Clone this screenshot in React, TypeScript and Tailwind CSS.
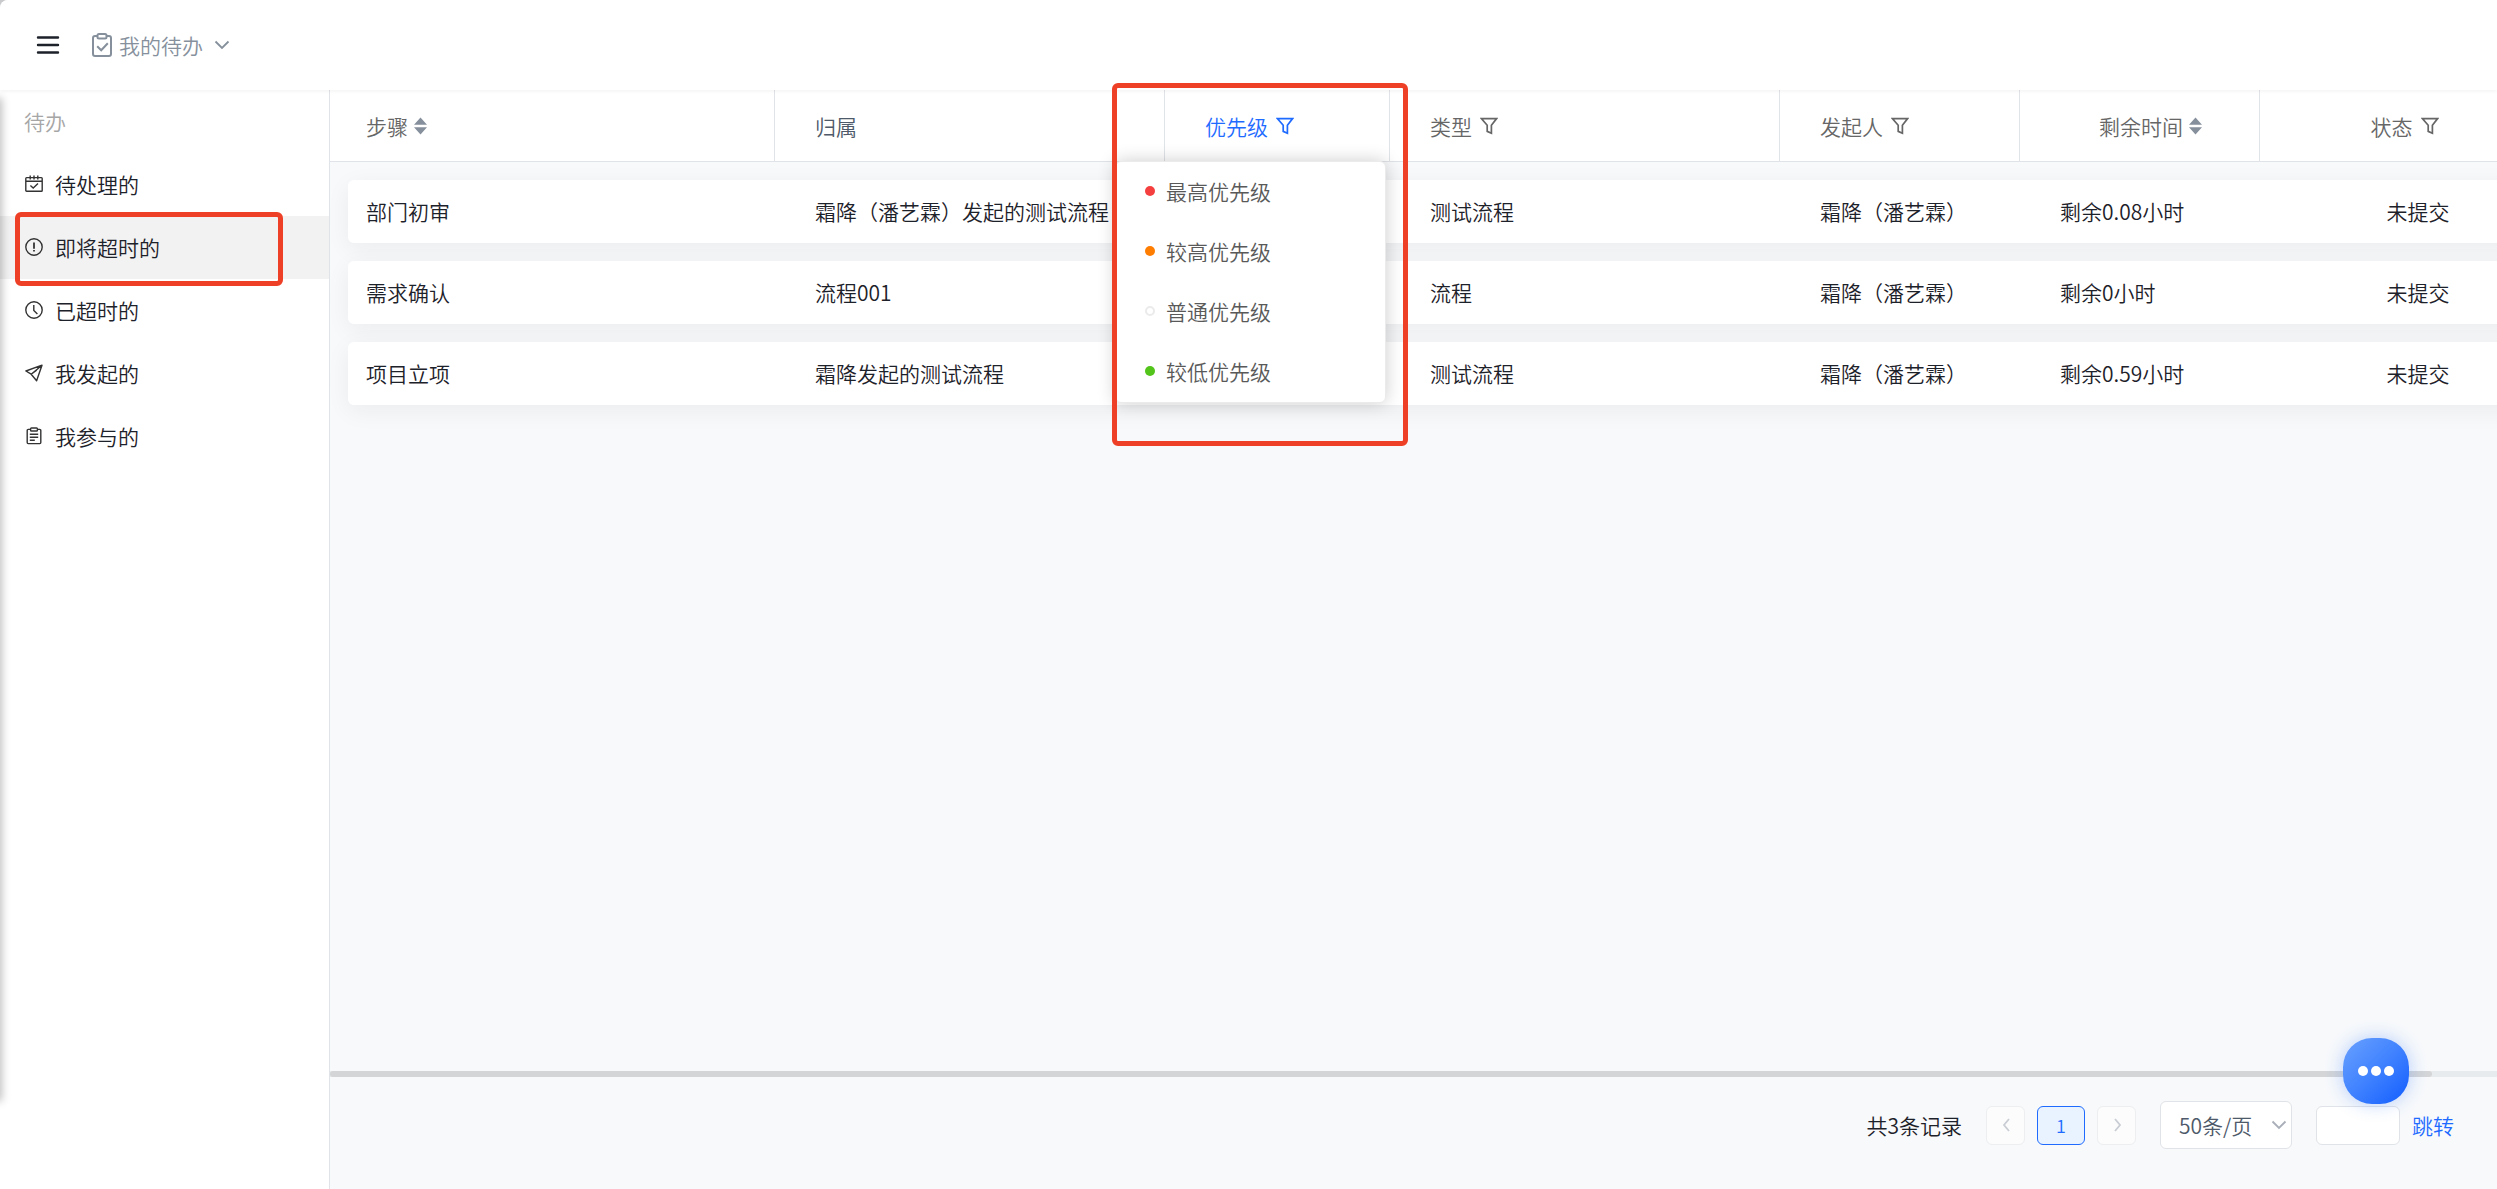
import { useState } from 'react'
import type { ReactNode } from 'react'
import clsx from 'clsx'

interface Task {
  id: string
  step: string
  owner: string
  type: string
  creator: string
  remaining: string
  status: string
}

interface MenuItem {
  key: string
  label: string
  icon: ReactNode
}

const tasks: Task[] = [
  { id: '1', step: '部门初审', owner: '霜降（潘艺霖）发起的测试流程', type: '测试流程', creator: '霜降（潘艺霖）', remaining: '剩余0.08小时', status: '未提交' },
  { id: '2', step: '需求确认', owner: '流程001', type: '流程', creator: '霜降（潘艺霖）', remaining: '剩余0小时', status: '未提交' },
  { id: '3', step: '项目立项', owner: '霜降发起的测试流程', type: '测试流程', creator: '霜降（潘艺霖）', remaining: '剩余0.59小时', status: '未提交' },
]

const priorities = [
  { label: '最高优先级', dot: 'bg-[#f53f3f]' },
  { label: '较高优先级', dot: 'bg-[#ff7d00]' },
  { label: '普通优先级', dot: 'border-2 border-[#ebebeb] bg-white' },
  { label: '较低优先级', dot: 'bg-[#52c41a]' },
]

const iconProps = {
  viewBox: '0 0 18 18',
  fill: 'none',
  stroke: 'currentColor',
  strokeWidth: 1.4,
  className: 'size-[18px] shrink-0 text-[#333]',
  'aria-hidden': true,
} as const

const menu: MenuItem[] = [
  {
    key: 'todo',
    label: '待处理的',
    icon: (
      <svg {...iconProps}>
        <rect x="0.8" y="2.6" width="16.4" height="13.6" rx="0.8" />
        <path d="M1 6.2h16M5.2.6v3.800M9 .6v3.800M12.800.6v3.800M5.400 10.400l2.800 2.600 4.800-4.400" />
      </svg>
    ),
  },
  {
    key: 'soon',
    label: '即将超时的',
    icon: (
      <svg {...iconProps}>
        <circle cx="9" cy="9" r="8.2" />
        <path d="M9 4.4v6.400M9 12v1.600" strokeWidth="1.800" />
      </svg>
    ),
  },
  {
    key: 'overdue',
    label: '已超时的',
    icon: (
      <svg {...iconProps}>
        <circle cx="9" cy="9" r="8.2" />
        <path d="M8.800 4v5.400l3.600 3.600" />
      </svg>
    ),
  },
  {
    key: 'started',
    label: '我发起的',
    icon: (
      <svg {...iconProps} strokeLinejoin="round">
        <path d="M17 1.2.9 7l5.3 3.2zM17 1.2l-5.4 15.6-5.4-6.6zM6.2 10.2 11.6 6.2" />
      </svg>
    ),
  },
  {
    key: 'joined',
    label: '我参与的',
    icon: (
      <svg {...iconProps}>
        <path d="M5.600 2.400H3.200a1 1 0 0 0-1 1v12.200a1 1 0 0 0 1 1h11.600a1 1 0 0 0 1-1V3.400a1 1 0 0 0-1-1h-2.400" />
        <rect x="5.600" y="1" width="6.800" height="3" rx="0.800" />
        <path d="M4.800 7.200h8.400M4.800 10.200h8.400M4.800 13.200h5" />
      </svg>
    ),
  },
]

function SortIcon() {
  return (
    <svg viewBox="0 0 13 18" className="h-[18px] w-[13px] shrink-0 fill-[#86909c]" aria-hidden="true">
      <path d="M6.500 .4 13 7.800H0zM6.500 17.600 0 10.200h13z" />
    </svg>
  )
}

function FilterIcon() {
  return (
    <svg viewBox="0 0 18 18" className="size-[18px] shrink-0" fill="none" stroke="currentColor" strokeWidth="1.700" aria-hidden="true">
      <path d="M1.400 1.600h15.200l-5.200 6.600v8L7.200 14.400V8.200z" />
    </svg>
  )
}

function Chevron({ className, d }: { className: string; d: string }) {
  return (
    <svg viewBox="0 0 16 16" className={className} fill="none" stroke="currentColor" strokeWidth="1.800" aria-hidden="true">
      <path d={d} />
    </svg>
  )
}

function Columns({ first }: { first: string }) {
  return (
    <colgroup>
      <col className={first} />
      <col className="w-[390px]" />
      <col className="w-[225px]" />
      <col className="w-[390px]" />
      <col className="w-[240px]" />
      <col className="w-[240px]" />
      <col className="w-[268px]" />
    </colgroup>
  )
}

function HeaderCell({ children, className, center }: { children: ReactNode; className?: string; center?: boolean }) {
  return (
    <th
      scope="col"
      className={clsx('border-r border-b border-[#e0e3e7] p-0 pr-[18px] font-[350]', className ?? 'pl-10')}
    >
      <div className={clsx('flex items-center', center && 'justify-center')}>{children}</div>
    </th>
  )
}

function TaskTable() {
  return (
    <div className="flex-1 overflow-hidden">
      <table className="w-[2198px] table-fixed border-separate border-spacing-0 bg-white text-left text-[#666]">
        <Columns first="w-[445px]" />
        <thead>
          <tr className="h-[72px]">
            <HeaderCell className="pl-9">
              <button type="button" className="flex items-center gap-[6px]">步骤<SortIcon /></button>
            </HeaderCell>
            <HeaderCell>
              <span className="text-[#4e5969]">归属</span>
            </HeaderCell>
            <HeaderCell>
              <button type="button" aria-expanded="true" className="flex items-center gap-2 text-[#1f6bff]">优先级<FilterIcon /></button>
            </HeaderCell>
            <HeaderCell>
              <button type="button" className="flex items-center gap-2">类型<FilterIcon /></button>
            </HeaderCell>
            <HeaderCell>
              <button type="button" className="flex items-center gap-2">发起人<FilterIcon /></button>
            </HeaderCell>
            <HeaderCell center>
              <button type="button" className="flex items-center gap-[6px]">剩余时间<SortIcon /></button>
            </HeaderCell>
            <HeaderCell center>
              <button type="button" className="flex items-center gap-2">状态<FilterIcon /></button>
            </HeaderCell>
          </tr>
        </thead>
      </table>
      <div className="px-[18px]">
        <table className="w-[2180px] table-fixed border-separate border-spacing-x-0 border-spacing-y-[18px] text-left text-[#1d2129]">
          <Columns first="w-[427px]" />
          <tbody>
            {tasks.map((task) => (
              <tr key={task.id} className="h-[63px] rounded-md shadow-[0_6px_24px_0_rgba(29,33,41,0.06)]">
                <td className="rounded-l-md bg-white p-0 pb-0.5 pl-[18px]">{task.step}</td>
                <td className="bg-white p-0 pb-0.5 pl-10 whitespace-nowrap">{task.owner}</td>
                <td className="bg-white p-0" />
                <td className="bg-white p-0 pb-0.5 pl-10">{task.type}</td>
                <td className="bg-white p-0 pb-0.5 pl-10 whitespace-nowrap">{task.creator}</td>
                <td className="bg-white p-0 pb-0.5 pl-10">{task.remaining}</td>
                <td className="bg-white p-0 pb-0.5 pl-12 text-center">{task.status}</td>
              </tr>
            ))}
          </tbody>
        </table>
      </div>
    </div>
  )
}

function Pagination() {
  const [size, setSize] = useState('50')
  const [target, setTarget] = useState('')

  return (
    <div className="flex items-center justify-end pt-6 pr-[43px] pb-10">
      <span className="mr-6 text-[#1d2129]">共3条记录</span>
      <button type="button" disabled aria-label="上一页" className="mr-3 flex size-[39px] items-center justify-center rounded-md border border-[#eceef0] bg-[#fcfcfc] text-[#c9cdd4]">
        <Chevron className="size-4" d="M11 2 6 8l5 6" />
      </button>
      <button type="button" aria-current="page" className="mr-3 h-[39px] w-12 rounded-md border border-[#1f6bff] bg-[#e8f3ff] text-lg leading-none text-[#1f6bff]">
        1
      </button>
      <button type="button" disabled aria-label="下一页" className="mr-6 flex size-[39px] items-center justify-center rounded-md border border-[#eceef0] bg-[#fcfcfc] text-[#c9cdd4]">
        <Chevron className="size-4" d="M6 2l5 6-5 6" />
      </button>
      <div className="relative mr-6">
        <select
          aria-label="每页条数"
          value={size}
          onChange={(event) => setSize(event.target.value)}
          className="h-12 w-[132px] appearance-none rounded-md border border-[#e0e3e7] bg-white pl-[18px] font-[350] text-[#4e5969]"
        >
          <option value="20">20条/页</option>
          <option value="50">50条/页</option>
        </select>
        <Chevron className="pointer-events-none absolute top-4 right-[5px] size-4 text-[#a9aeb8]" d="M1.500 4.500 8 11l6.500-6.500" />
      </div>
      <input
        aria-label="跳转页码"
        value={target}
        onChange={(event) => setTarget(event.target.value)}
        className="mr-3 h-[39px] w-[84px] rounded-md border border-[#e0e3e7] bg-white px-2"
      />
      <button type="button" className="text-[#1f6bff]">跳转</button>
    </div>
  )
}

export default function App() {
  const [active, setActive] = useState('soon')

  return (
    <div className="bg-[#c9cacc]">
      <div className="relative flex min-h-screen flex-col overflow-hidden rounded-tl-lg bg-[#f7f9fb] font-['Noto_Sans_CJK_SC',sans-serif] text-[21px] leading-8 font-[350]">
        <header className="relative z-10 flex h-[90px] shrink-0 items-center bg-white pl-9 shadow-[0_1px_4px_0_rgba(0,0,0,0.06)]">
          <button type="button" aria-label="展开菜单" className="mr-8">
            <svg viewBox="0 0 24 20" className="h-5 w-6" fill="none" stroke="#1d2129" strokeWidth="2.400" strokeLinecap="round" aria-hidden="true">
              <path d="M2 2.500h20M2 10h20M2 17.500h20" />
            </svg>
          </button>
          <button type="button" className="flex items-center text-[#86909c]">
            <svg viewBox="0 0 20 24" className="mr-[7px] h-6 w-5" fill="none" stroke="currentColor" strokeWidth="2" aria-hidden="true">
              <path d="M5.500 3H3a2 2 0 0 0-2 2v16a2 2 0 0 0 2 2h14a2 2 0 0 0 2-2V5a2 2 0 0 0-2-2h-2.500" />
              <rect x="5.500" y="1" width="9" height="4.400" rx="1.500" />
              <path d="M5.200 13.200l4 4 6.600-7" />
            </svg>
            我的待办
            <Chevron className="ml-[11px] size-4" d="M1.500 4.500 8 11l6.500-6.500" />
          </button>
        </header>

        <div className="flex flex-1">
          <aside className="w-[330px] shrink-0 border-r border-[#e0e3e7] bg-white">
            <h2 className="flex h-[63px] items-center pb-0.5 pl-6 text-[#a6a6a6]">待办</h2>
            <nav>
              {menu.map((item) => (
                <button
                  key={item.key}
                  type="button"
                  onClick={() => setActive(item.key)}
                  className={clsx(
                    'relative flex h-[63px] w-full items-center gap-3 pb-0.5 pl-[25px] text-[#1d2129]',
                    active === item.key && 'bg-[#f2f2f2]',
                  )}
                >
                  {item.icon}
                  {item.label}
                  {item.key === 'soon' ? (
                    <span className="absolute -top-1 left-[15px] h-[74px] w-[268px] rounded-md border-5 border-[#ee4026]" />
                  ) : null}
                </button>
              ))}
            </nav>
          </aside>

          <main className="relative flex min-w-0 flex-1 flex-col">
            <TaskTable />
            <div className="h-[6px] bg-[#e8ebee]">
              <div className="h-full w-[97%] rounded-full bg-[#d3d5d7]" />
            </div>
            <Pagination />

            <ul className="absolute top-[71px] left-[785px] w-[271px] rounded-md border border-[#ebebeb] bg-white shadow-[0_0_18px_0_rgba(0,0,0,0.2)]">
              {priorities.map((priority) => (
                <li key={priority.label}>
                  <button type="button" className="flex h-[60px] w-full items-center gap-[11px] pb-0.5 pl-[29px] text-[#595959]">
                    <span className={clsx('size-[10px] rounded-full', priority.dot)} />
                    {priority.label}
                  </button>
                </li>
              ))}
            </ul>

            <button
              type="button"
              aria-label="更多"
              className="absolute right-[88px] bottom-[85px] flex size-[66px] items-center justify-center gap-[3px] rounded-[29px] bg-linear-to-br from-[#6aa1ff] to-[#0e5cff] shadow-[0_0_18px_0_rgba(31,107,255,0.3)]"
            >
              <span className="size-[10px] rounded-full bg-white" />
              <span className="size-[10px] rounded-full bg-white" />
              <span className="size-[10px] rounded-full bg-white" />
            </button>
          </main>
        </div>

        {/* shadow cast by the collapsed panel on the left */}
        <div className="pointer-events-none absolute top-[100px] bottom-[90px] -left-2 w-2 shadow-[0_0_8px_2px_rgba(0,0,0,0.25)]" />
        <div className="pointer-events-none absolute top-[83px] left-[1112px] z-20 h-[363px] w-[296px] rounded-md border-5 border-[#ee4026]" />
      </div>
    </div>
  )
}
